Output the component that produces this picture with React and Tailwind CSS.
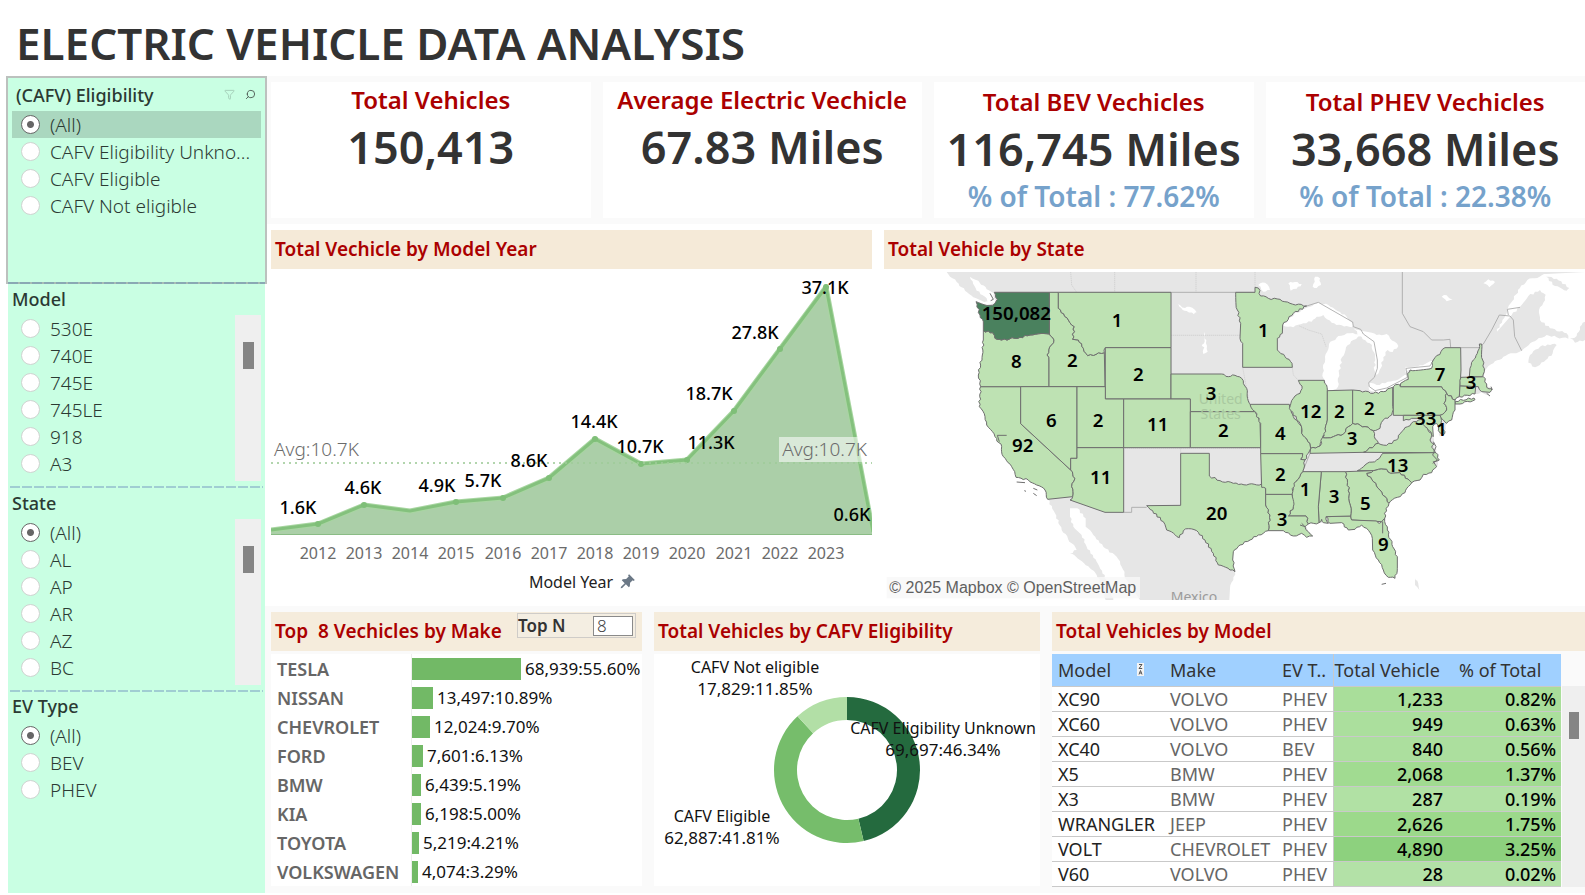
import React from "react";
import { Search, Filter } from "lucide-react";

const kpis = [
  { title: "Total Vehicles", value: "150,413" },
  { title: "Average Electric Vechicle", value: "67.83 Miles" },
  { title: "Total BEV Vechicles", value: "116,745 Miles", share: "% of Total : 77.62%" },
  { title: "Total PHEV Vechicles", value: "33,668 Miles", share: "% of Total : 22.38%" },
];

const makes = [
  ["TESLA", "68,939:55.60%", 109],
  ["NISSAN", "13,497:10.89%", 21],
  ["CHEVROLET", "12,024:9.70%", 18],
  ["FORD", "7,601:6.13%", 11],
  ["BMW", "6,439:5.19%", 9],
  ["KIA", "6,198:5.00%", 9],
  ["TOYOTA", "5,219:4.21%", 7],
  ["VOLKSWAGEN", "4,074:3.29%", 6],
];

const models = [
  ["XC90", "VOLVO", "PHEV", "1,233", "0.82%", "bg-[#a9de9a]"],
  ["XC60", "VOLVO", "PHEV", "949", "0.63%", "bg-[#abdf9d]"],
  ["XC40", "VOLVO", "BEV", "840", "0.56%", "bg-[#acdf9e]"],
  ["X5", "BMW", "PHEV", "2,068", "1.37%", "bg-[#a1db91]"],
  ["X3", "BMW", "PHEV", "287", "0.19%", "bg-[#b1e1a4]"],
  ["WRANGLER", "JEEP", "PHEV", "2,626", "1.75%", "bg-[#9cd98b]"],
  ["VOLT", "CHEVROLET", "PHEV", "4,890", "3.25%", "bg-[#8dd17e]"],
  ["V60", "VOLVO", "PHEV", "28", "0.02%", "bg-[#b3e1a7]"],
];

/* ---------- sidebar ---------- */

function Option({ group, label, checked, active }) {
  return (
    <label
      className={
        "flex h-[27px] shrink-0 items-center gap-2.5 pl-[9px] " + (active ? "bg-[#aad7bf]" : "")
      }
    >
      <input
        type="radio"
        name={group}
        defaultChecked={checked}
        className="size-[19px] shrink-0 appearance-none rounded-full border border-[#cfd3d0] bg-white checked:border-[#666] checked:bg-[radial-gradient(circle,#666_3px,#fff_4px)]"
      />
      <span className="pt-0.5 text-[19px] leading-[27px] font-light whitespace-nowrap text-[#2b3a33]">{label}</span>
    </label>
  );
}

function ScrollBar() {
  return (
    <div className="w-[26px] shrink-0 bg-[#efefef] pt-[27px]">
      <div className="mx-auto h-[27px] w-[11px] bg-[#858585]" />
    </div>
  );
}

function Dashes() {
  return (
    <div className="mx-0.5 h-0.5 bg-[repeating-linear-gradient(90deg,#a0cdd2_0_10px,transparent_10px_12px)]" />
  );
}

function ListFilter({ title, group, options, selected }) {
  return (
    <fieldset className="h-[202px] px-1">
      <legend className="pt-0.5 text-lg leading-[26px] font-medium text-[#2b3a33]">{title}</legend>
      <div className="mt-[3px] flex h-[166px]">
        <div className="flex min-w-0 flex-1 flex-col">
          {options.map((o) => (
            <Option key={o} group={group} label={o} checked={o === selected} />
          ))}
        </div>
        <ScrollBar />
      </div>
    </fieldset>
  );
}

function Sidebar() {
  return (
    <aside className="ml-2 flex w-[257px] shrink-0 flex-col bg-[#c9ffe3]">
      <fieldset aria-label="(CAFV) Eligibility" className="relative z-10 -mx-0.5 h-52 border-2 border-[#bcc1be] px-1">
        <div className="flex h-[33px] items-center justify-between px-1">
          <span className="text-lg font-medium text-[#2b3a33]">(CAFV) Eligibility</span>
          <span className="flex items-center gap-2.5 pr-px">
            <Filter size={11} color="#a3cdb7" />
            <Search size={11} color="#4d5a53" className="-scale-x-100" />
          </span>
        </div>
        <Option group="cafv" label="(All)" checked active />
        <Option group="cafv" label="CAFV Eligibility Unkno..." />
        <Option group="cafv" label="CAFV Eligible" />
        <Option group="cafv" label="CAFV Not eligible" />
      </fieldset>
      <div className="relative z-10 -mt-0.5 h-0.5 bg-[repeating-linear-gradient(90deg,#8aa9b4_0_10px,#a9bdb4_10px_12px)]" />
      <ListFilter title="Model" group="model" options={["530E", "740E", "745E", "745LE", "918", "A3"]} />
      <Dashes />
      <ListFilter
        title="State"
        group="state"
        selected="(All)"
        options={["(All)", "AL", "AP", "AR", "AZ", "BC"]}
      />
      <Dashes />
      <fieldset className="px-1">
        <legend className="pt-px text-lg leading-[26px] font-medium text-[#2b3a33]">EV Type</legend>
        <div className="mt-[3px]">
          <Option group="ev" label="(All)" checked />
          <Option group="ev" label="BEV" />
          <Option group="ev" label="PHEV" />
        </div>
      </fieldset>
    </aside>
  );
}

/* ---------- area chart ---------- */

const series = [
  [271, 530], [318, 524], [364, 505], [410, 511], [456, 502], [503, 498], [549, 478],
  [595, 439], [641, 464], [687, 460], [734, 411], [780, 349], [826, 287], [873, 532],
];
const years = ["2012", "2013", "2014", "2015", "2016", "2017", "2018", "2019", "2020", "2021", "2022", "2023"];
const valueLabels = [
  ["1.6K", 298, 514], ["4.6K", 363, 494], ["4.9K", 437, 492], ["5.7K", 483, 487], ["8.6K", 529, 467],
  ["14.4K", 594, 428], ["10.7K", 640, 453], ["11.3K", 711, 449], ["18.7K", 709, 400],
  ["27.8K", 755, 339], ["37.1K", 825, 294], ["0.6K", 852, 521],
];

function AreaChart() {
  const pts = series.map((p) => p.join(",")).join(" ");
  return (
    <svg viewBox="271 269 601 337" className="block w-full" role="img" aria-label="Total vehicles by model year">
      <polygon points={`271,535 ${pts} 873,535`} fill="#abcfa8" />
      <polyline points={pts} fill="none" stroke="#a8d6a1" strokeWidth="5" strokeLinejoin="round" />
      <polyline points={pts} fill="none" stroke="#84c17d" strokeWidth="3" strokeLinejoin="round" />
      {series.slice(1, 13).map(([x, y], i) => (i === 2 ? null : <circle key={x} cx={x} cy={y} r="3" fill="#7fbf78" />))}
      <line x1="271" x2="872" y1="534.5" y2="534.5" stroke="#8abc85" />
      <line x1="271" x2="872" y1="463" y2="463" stroke="#9fcb98" strokeWidth="2" strokeDasharray="2 4" strokeOpacity="0.8" />
      <rect x="779" y="437" width="89" height="25" fill="#fff" fillOpacity="0.55" />
      <g fontSize="19" fontWeight="300" fill="#6b6b6b">
        <text x="274" y="456">Avg:10.7K</text>
        <text x="867" y="456" textAnchor="end">Avg:10.7K</text>
      </g>
      <g fontSize="18" fontWeight="500" fill="#000" textAnchor="middle">
        {valueLabels.map(([t, x, y]) => (
          <text key={t} x={x} y={y}>{t}</text>
        ))}
      </g>
      <g fontSize="16" fill="#6b6b6b" textAnchor="middle">
        {years.map((t, i) => (
          <text key={t} x={series[i + 1][0]} y="559">{t}</text>
        ))}
      </g>
      <text x="571" y="588" fontSize="16" fill="#222" textAnchor="middle">Model Year</text>
      <g transform="translate(627 582) rotate(45)" fill="#6b7886">
        <path d="M-4,-7 H4 V-5.4 H2.8 V-1.6 L5,1 V2.4 H.8 V7.6 L0,9 L-.8,7.6 V2.4 H-5 V1 L-2.8,-1.6 V-5.4 H-4 Z" />
      </g>
    </svg>
  );
}

/* ---------- map (drawn at three units per pixel) ---------- */

// Breaks a short slanted edge into small jagged steps, the same way from either end,
// so that neighbouring states share one border line.
function roughen(flat) {
  const n = flat.trim().split(/\s+/).map((s) => s.split(",").map(Number));
  const out = [];
  for (let i = 0; i < n.length; i++) {
    const a = n[i];
    const b = n[(i + 1) % n.length];
    out.push(a);
    const dx = b[0] - a[0];
    const dy = b[1] - a[1];
    const len = Math.hypot(dx, dy);
    if (Math.abs(dx) < 3 || Math.abs(dy) < 3 || len > 72 || len < 9) continue;
    const steps = Math.max(2, Math.round(len / 8));
    const flip = a[0] < b[0] || (a[0] === b[0] && a[1] < b[1]) ? 1 : -1;
    for (let k = 1; k < steps; k++) {
      const t = k / steps;
      const x = a[0] + dx * t;
      const y = a[1] + dy * t;
      const w = Math.sin(x * 1.7 + y * 2.3) * 2.8 * flip;
      out.push([x - (dy / len) * w, y + (dx / len) * w]);
    }
  }
  return "M" + out.map((p) => p[0].toFixed(1) + "," + p[1].toFixed(1)).join("L") + "Z";
}

const land =
  "20,36 50,66 75,92 100,112 125,122 150,126 163,130 150,136 108,125 120,165 130,185 130,240 127,285 115,345 122,380 118,440 135,470 140,495 165,530 185,560 190,590 215,620 228,652 265,660 290,675 315,690 323,718 345,760 365,810 395,850 410,870 390,880 420,900 450,925 470,945 490,985 497,1020 868,1020 870,985 880,960 885,935 878,900 880,875 900,855 930,840 955,825 985,812 1030,812 1060,828 1085,820 1100,832 1118,828 1105,815 1095,795 1137,788 1150,788 1170,790 1205,788 1225,810 1245,808 1265,795 1280,805 1297,835 1298,870 1315,900 1330,930 1345,952 1365,955 1372,925 1372,890 1358,860 1342,810 1334,775 1338,745 1347,730 1372,712 1395,698 1415,668 1440,660 1450,643 1475,638 1490,620 1498,600 1488,578 1482,545 1475,520 1470,500 1490,490 1500,530 1512,515 1520,490 1535,480 1545,450 1545,420 1560,410 1605,402 1625,395 1640,405 1655,388 1640,372 1630,350 1640,325 1660,310 1690,290 1720,280 1745,272 1760,260 1790,240 1820,225 1850,232 1885,236 1880,220 1830,205 1800,180 1797,150 1810,128 1817,104 1800,90 1765,108 1740,140 1715,165 1665,222 1700,160 1712,130 1740,84 1762,60 1820,42 1935,36";

const waters = [
  "1028,195 1045,175 1085,150 1110,140 1135,127 1165,135 1220,170 1238,190 1235,202 1205,196 1175,188 1150,165 1130,170 1115,185 1090,190 1060,202",
  "1160,392 1148,340 1155,290 1167,252 1195,228 1230,220 1272,224 1240,240 1218,262 1206,292 1197,340 1194,380 1175,396",
  "1240,204 1280,215 1310,225 1340,222 1375,258 1358,276 1343,270 1330,292 1322,325 1310,345 1303,330 1306,300 1296,255 1268,238",
  "1284,370 1288,390 1310,400 1335,393 1358,382 1385,370 1403,358 1402,345 1360,362 1310,375",
  "1397,320 1440,316 1476,302 1482,315 1474,326 1410,330 1396,338",
  "90,50 115,62 140,88 162,100 166,128 145,128 135,110 110,92",
  "390,745 412,745 437,775 437,800 460,825 490,860 530,890 545,920 560,960 600,1020 520,1020 500,960 470,905 440,860 425,825 400,800 390,770",
  "715,132 735,144 748,140 770,157 762,163 740,153 728,150",
  "792,215 798,250 803,275 790,282 793,262 785,255 794,245",
  "1118,80 1125,50 1140,55 1143,75 1130,84",
  "1045,70 1065,66 1085,72 1070,86 1052,92",
  "955,75 975,68 990,90 970,95",
  "1505,110 1520,106 1538,118 1520,124",
  "1630,70 1645,58 1665,66 1648,82",
];

const islands = [
  "1765,308 1785,322 1812,305 1838,280 1850,255 1838,252 1800,260 1770,285",
  "1818,50 1850,56 1888,84 1880,92 1845,78",
  "1890,235 1910,228 1925,195 1935,185 1935,240 1905,248",
  "1425,955 1432,962 1438,990 1425,975",
];

const states = [
  "122,380 242,380 242,491 392,630 405,655 395,680 398,710 323,718 315,690 290,675 265,660 228,652 215,620 190,590 185,560 165,530 140,495 135,470 118,440",
  "130,212 158,218 165,235 185,240 240,232 270,225 328,222 342,240 321,285 327,300 327,380 122,380 115,345 127,285 130,240",
  "328,97 355,97 355,145 385,180 403,200 398,238 415,240 430,265 443,287 493,278 495,380 327,380 327,300 321,285 342,240 328,222",
  "355,97 693,97 693,263 496,263 493,278 443,287 430,265 415,240 398,238 403,200 385,180 355,145",
  "496,263 693,263 693,417 496,417",
  "693,342 845,342 865,350 885,346 905,355 920,385 928,430 945,455 751,455 751,417 693,417",
  "242,380 411,380 411,595 392,595 392,630 242,491",
  "411,380 496,380 496,417 551,417 551,563 411,563",
  "551,417 751,417 751,563 551,563",
  "751,455 945,455 960,485 962,563 751,563",
  "411,563 551,563 551,757 495,757 390,720 398,710 395,680 405,655 392,630 392,595 411,595",
  "722,580 808,580 808,648 840,662 880,670 920,675 965,672 977,685 977,735 990,765 985,812 955,825 930,840 900,855 880,875 878,900 885,935 870,930 835,915 820,880 795,840 770,812 745,806 730,812 718,833 680,810 670,785 620,737 722,736",
  "887,97 945,97 945,82 955,84 962,108 985,115 1020,118 1050,130 1100,138 1060,160 1028,195 1027,220 1012,235 1012,270 1035,290 1056,310 1057,322 908,322 908,250 900,235 902,190 892,150",
  "930,433 1048,433 1060,470 1085,500 1085,520 1110,550 1112,565 1105,580 1095,600 1082,598 1088,581 962,581 962,490 945,455",
  "1075,361 1153,361 1162,390 1162,480 1157,515 1148,535 1140,558 1112,565 1110,550 1085,520 1080,490 1048,445 1060,415 1080,400 1086,378",
  "1162,392 1238,390 1238,490 1225,500 1210,522 1180,530 1147,533 1157,515 1162,480",
  "1238,390 1260,392 1300,400 1330,395 1358,382 1358,440 1355,465 1330,480 1320,505 1300,512 1275,500 1238,490",
  "1147,533 1180,530 1210,522 1225,500 1238,490 1275,500 1300,512 1303,530 1315,550 1270,577 1110,580 1112,565 1140,558",
  "1360,380 1375,373 1381,380 1505,380 1520,400 1512,430 1520,450 1500,466 1360,466",
  "1381,380 1382,370 1405,358 1403,340 1410,330 1475,325 1480,300 1515,263 1562,263 1563,330 1558,410 1545,420 1520,400 1505,380",
  "1546,424 1602,414 1605,419 1560,432 1545,432",
  "1520,400 1545,420 1545,450 1535,480 1520,490 1510,480 1500,466 1520,450 1512,430",
  "1563,352 1630,350 1640,372 1640,382 1655,386 1650,397 1625,395 1615,380 1560,378",
  "1560,378 1607,380 1605,402 1558,410",
  "1618,252 1625,252 1628,300 1633,335 1628,350 1588,350 1590,325 1600,300 1612,280",
  "1390,466 1500,466 1503,490 1515,515 1508,525 1495,512 1490,490 1478,500 1480,530 1468,512 1450,500 1440,475 1415,475 1390,482",
  "1270,577 1315,550 1340,556 1370,540 1385,515 1420,485 1445,478 1455,500 1475,520 1470,540 1482,552 1475,562 1488,578",
  "1328,580 1488,578 1498,600 1480,605 1490,620 1475,638 1450,643 1440,660 1415,668 1380,638 1352,640 1340,628 1300,632 1252,632 1275,615 1310,600",
  "1280,640 1300,632 1340,628 1352,640 1380,638 1415,668 1395,698 1372,712 1347,730 1335,710 1320,690 1300,665",
  "1216,635 1300,632 1280,640 1300,665 1320,690 1335,710 1347,730 1338,745 1334,775 1325,785 1235,780 1232,768 1228,700",
  "1158,770 1232,768 1235,780 1310,783 1318,790 1334,775 1342,810 1358,860 1372,890 1372,925 1365,955 1345,952 1330,930 1315,900 1298,870 1297,835 1280,805 1265,795 1245,808 1225,810 1205,788 1170,790",
  "1144,635 1216,635 1228,700 1232,768 1158,770 1165,790 1150,788 1145,778 1137,788 1135,740",
  "1088,635 1144,635 1135,740 1137,788 1105,792 1098,768 1045,768 1060,740 1055,700 1062,670",
  "977,703 1056,703 1060,740 1045,768 1098,768 1105,792 1095,800 1105,815 1118,828 1100,832 1085,820 1060,828 1030,812 985,812 990,765 977,735",
  "962,581 1088,581 1082,598 1095,600 1088,635 1062,670 1056,703 977,703 977,685 965,682",
];

const counts = [
  ["1", 531, 200], ["8", 229, 322], ["2", 397, 320], ["2", 595, 362], ["3", 813, 419], ["6", 334, 500],
  ["2", 474, 500], ["11", 653, 512], ["2", 850, 530], ["92", 248, 575], ["11", 482, 671], ["20", 830, 779],
  ["1", 970, 230], ["4", 1021, 538], ["12", 1112, 473], ["2", 1198, 473], ["2", 1288, 464], ["3", 1236, 554],
  ["7", 1500, 362], ["3", 1593, 386], ["33", 1457, 493], ["1", 1505, 525], ["13", 1373, 635], ["2", 1021, 662],
  ["1", 1095, 705], ["3", 1182, 728], ["5", 1276, 749], ["3", 1026, 797], ["9", 1330, 872],
];

function StateMap() {
  return (
    <svg viewBox="-168 36 2103 984" className="block w-full" role="img" aria-label="Total vehicles by state">
      <path d={roughen(land)} fill="#e6e6e6" />
      <g fill="#fff">
        {waters.map((p) => (
          <path key={p} d={roughen(p)} />
        ))}
      </g>
      <g fill="#e6e6e6">
        {islands.map((p) => (
          <path key={p} d={roughen(p)} />
        ))}
      </g>
      <g fill="none" stroke="#c9c9c9" strokeWidth="2" strokeDasharray="4 2">
        <path d="M392,36 L395,75 L410,97 M524,36 V97 M768,36 V97 M945,36 V82 M693,226 H903 M693,97 V342 M1078,198 L1105,210 L1145,222 L1158,260" />
        <path d="M551,565 V757 M555,565 H962 M722,565 V580 M962,565 V672 M1057,322 L1060,345 L1075,361 M908,322 L915,360 L928,430" />
      </g>
      <g fill="none" stroke="#a6a6a6" strokeWidth="2.5">
        <path d="M163,97 H945" />
        <path d="M1100,138 L1135,127 L1238,186 L1240,200 L1262,208 L1270,222 L1302,245 L1312,300 L1312,325 L1303,352 L1286,368 L1288,380 L1305,392 L1340,384 L1402,352 L1398,325 L1470,318 L1480,300" />
        <path d="M1387,36 V160 L1410,200 L1450,215 L1475,240 L1510,240 L1530,238 L1532,263 M1562,263 H1618 L1630,252 L1655,210 L1678,165 L1710,168 L1720,180 L1724,230 L1745,272" />
        <path d="M1705,165 L1702,148 L1740,142 M1110,580 L1088,635 H1144" />
        <path d="M551,757 H575 V742 H620" />
      </g>
      <g fill="#bee2b3" stroke="#6f6f6f" strokeWidth="3" strokeLinejoin="round">
        {states.map((p) => (
          <path key={p} d={roughen(p)} />
        ))}
        <path
          d={roughen("163,97 328,97 328,222 270,225 240,232 185,240 165,235 158,218 130,212 130,185 120,165 108,125 150,136 165,130 172,118")}
          fill="#4a815e"
        />
      </g>
      <g fill="none" stroke="#6f6f6f" strokeWidth="3">
        <path d="M172,526 H200 M172,526 L178,545 M230,666 L255,668 M253,692 L258,694 M280,685 L292,690 M280,700 L290,707 M1325,973 L1338,970 M1480,545 L1488,560 L1478,585 L1492,600 L1478,610 M1080,795 L1095,800 L1085,790 M1328,785 V820 M1640,400 L1650,408 M1653,380 L1657,390 M150,100 L160,118 L152,122" />
      </g>
      <g fontSize="42" fill="#a9c9a0" textAnchor="middle">
        <text x="842" y="431">United</text>
        <text x="842" y="478">States</text>
        <text x="762" y="1026" fill="#9b9b9b">Mexico</text>
      </g>
      <g fontSize="56" fontWeight="600" fill="#000" textAnchor="middle">
        <text x="229" y="180">150,082</text>
        {counts.map(([t, x, y]) => (
          <text key={x + "-" + y} x={x} y={y + 2}>{t}</text>
        ))}
      </g>
      <rect x="-160" y="951" width="760" height="64" fill="#f8f8f8" fillOpacity="0.8" />
      <text x="-152" y="998" fontSize="48" fill="#606060" fontFamily="'Liberation Sans', Arial, sans-serif">
        © 2025 Mapbox © OpenStreetMap
      </text>
    </svg>
  );
}

/* ---------- donut ---------- */

function arc(from, to) {
  const p = (f, r) => {
    const a = f * 2 * Math.PI;
    return `${847 + r * Math.sin(a)},${770 - r * Math.cos(a)}`;
  };
  const big = to - from > 0.5 ? 1 : 0;
  return `M${p(from, 73)} A73,73 0 ${big} 1 ${p(to, 73)} L${p(to, 50)} A50,50 0 ${big} 0 ${p(from, 50)} Z`;
}

function Donut() {
  return (
    <svg viewBox="654 654 386 232" className="block w-full bg-white" role="img" aria-label="Total vehicles by CAFV eligibility">
      <path d={arc(0, 0.4634)} fill="#246a3e" />
      <path d={arc(0.4634, 0.8815)} fill="#76bd6b" />
      <path d={arc(0.8815, 1)} fill="#b2dfa6" />
      <g fontSize="16" fill="#111" textAnchor="middle">
        <text x="755" y="673">CAFV Not eligible</text>
        <text x="943" y="734">CAFV Eligibility Unknown</text>
        <text x="722" y="822">CAFV Eligible</text>
      </g>
      <g fontSize="17" fill="#111" textAnchor="middle">
        <text x="755" y="695">17,829:11.85%</text>
        <text x="943" y="756">69,697:46.34%</text>
        <text x="722" y="844">62,887:41.81%</text>
      </g>
    </svg>
  );
}

/* ---------- panels ---------- */

function PanelTitle({ children, tone = "bg-[#f5ead8]" }) {
  return (
    <h2 className={"h-[39px] pl-1 text-[19px] leading-[39px] font-semibold whitespace-pre text-[#ab0000] " + tone}>
      {children}
    </h2>
  );
}

function MakePanel() {
  return (
    <section className="min-w-0">
      <div className="flex h-[39px] justify-between bg-[#f5ecdc] pr-1.5">
        <PanelTitle tone="">{"Top  8 Vechicles by Make"}</PanelTitle>
        <label className="mt-px flex h-[25px] w-[119px] items-center justify-between border border-[#cfccc8] bg-[#f4eee2] pr-0.5 text-[17px] font-semibold text-[#333]">
          Top N
          <input
            defaultValue="8"
            className="h-5 w-10 border border-[#8a8a8a] bg-white px-[3px] text-[17px] font-light text-[#444]"
          />
        </label>
      </div>
      <div className="mt-[3px] h-[232px] bg-white">
        {makes.map(([name, value, w]) => (
          <div key={name} className="flex h-[29px] items-center">
            <span className="w-[140px] pl-1.5 text-lg leading-7 font-semibold text-[#666]">{name}</span>
            <span className="flex h-full items-center border-l border-[#eee]">
              <span className="h-[22px] bg-[#72b966]" style={{ width: w }} />
              <span className="pl-1 text-[17px] text-[#111]">{value}</span>
            </span>
          </div>
        ))}
      </div>
    </section>
  );
}

function ModelPanel() {
  return (
    <section className="min-w-0">
      <PanelTitle tone="bg-[#f5ecdc]">Total Vehicles by Model</PanelTitle>
      <div className="mt-[3px] flex">
        <table className="w-full table-fixed border-collapse text-lg">
          <colgroup>
            <col className="w-[114px]" />
            <col className="w-[110px]" />
            <col className="w-[57px]" />
            <col className="w-[114px]" />
            <col />
          </colgroup>
          <thead>
            <tr className="h-8 border-b border-[#c9c9c9] bg-[#a0d0ff] text-left leading-7 whitespace-nowrap text-[#333] [&>th]:p-0 [&>th]:font-normal">
              <th>
                <span className="flex items-center justify-between pr-[22px] pl-1.5">
                  Model
                  <svg viewBox="0 0 7 13" className="h-[13px] w-[7px]" aria-hidden="true">
                    <rect width="7" height="13" fill="#f4f4f4" />
                    <path d="M2,1.5 H5 L2,5.5 H5.2 M2,11.5 L3.5,7.5 L5,11.5 M2.5,10 H4.5" fill="none" stroke="#555" />
                  </svg>
                </span>
              </th>
              <th>
                <span className="pl-1">Make</span>
              </th>
              <th>
                <span className="pl-1.5">EV T..</span>
              </th>
              <th className="border-l border-[#c9c9c9]">
                <span className="pl-px">Total Vehicle</span>
              </th>
              <th>
                <span className="pl-3">% of Total</span>
              </th>
            </tr>
          </thead>
          <tbody>
            {models.map(([model, make, type, n, pct, tone]) => (
              <tr key={model} className="h-[25px] border-b border-[#c9c9c9] bg-white leading-[22px] [&>td]:pt-0 [&>td]:pb-0">
                <td className="pl-1.5 whitespace-nowrap text-[#222]">{model}</td>
                <td className="pl-1 text-[#666]">{make}</td>
                <td className="pl-1.5 text-[#666]">{type}</td>
                <td className={"border-l border-[#c9c9c9] pr-1 text-right font-medium text-black " + tone}>{n}</td>
                <td className={"pr-[5px] text-right font-medium text-black " + tone}>{pct}</td>
              </tr>
            ))}
          </tbody>
        </table>
        <div className="mt-8 ml-px w-[23px] shrink-0 bg-[#efefef] pt-[26px]">
          <div className="mx-auto h-[27px] w-2.5 bg-[#858585]" />
        </div>
      </div>
    </section>
  );
}

export default function App() {
  return (
    <div className="min-h-screen overflow-hidden bg-white pb-[3px] font-['Noto_Sans',sans-serif]">
      <h1 className="h-[76px] pt-[14px] pl-4 text-[44px] leading-[58px] font-semibold whitespace-nowrap text-[#333]">
        ELECTRIC VEHICLE DATA ANALYSIS
      </h1>
      <div className="flex">
        <Sidebar />
        <main className="min-w-0 flex-1">
          <div className="grid grid-cols-4 gap-3 bg-[#fafafa] py-1.5 pl-1.5">
            {kpis.map((k) => (
              <section key={k.title} className={"h-[136px] bg-white text-center font-semibold whitespace-nowrap " + (k.share ? "pt-0.5" : "")}>
                <h2 className="text-2xl leading-9 text-[#ab0000]">{k.title}</h2>
                <p className="text-[45px] leading-[58px] text-[#333]">{k.value}</p>
                {k.share && <p className="text-[28px] leading-9 text-[#76a2cb]">{k.share}</p>}
              </section>
            ))}
          </div>
          <div className="grid grid-cols-[601fr_701fr] gap-3 pt-1.5 pl-1.5">
            <section className="min-w-0">
              <PanelTitle>Total Vechicle by Model Year</PanelTitle>
              <AreaChart />
            </section>
            <section className="min-w-0">
              <PanelTitle>Total Vehicle by State</PanelTitle>
              <div className="pt-[3px]">
                <StateMap />
              </div>
            </section>
          </div>
          <div className="grid grid-cols-[371fr_386fr_533fr] gap-3 bg-[#fafafa] py-1.5 pl-1.5">
            <MakePanel />
            <section className="min-w-0">
              <PanelTitle tone="bg-[#f5ecdc]">Total Vehicles by CAFV Eligibility</PanelTitle>
              <div className="pt-[3px]">
                <Donut />
              </div>
            </section>
            <ModelPanel />
          </div>
        </main>
      </div>
    </div>
  );
}
